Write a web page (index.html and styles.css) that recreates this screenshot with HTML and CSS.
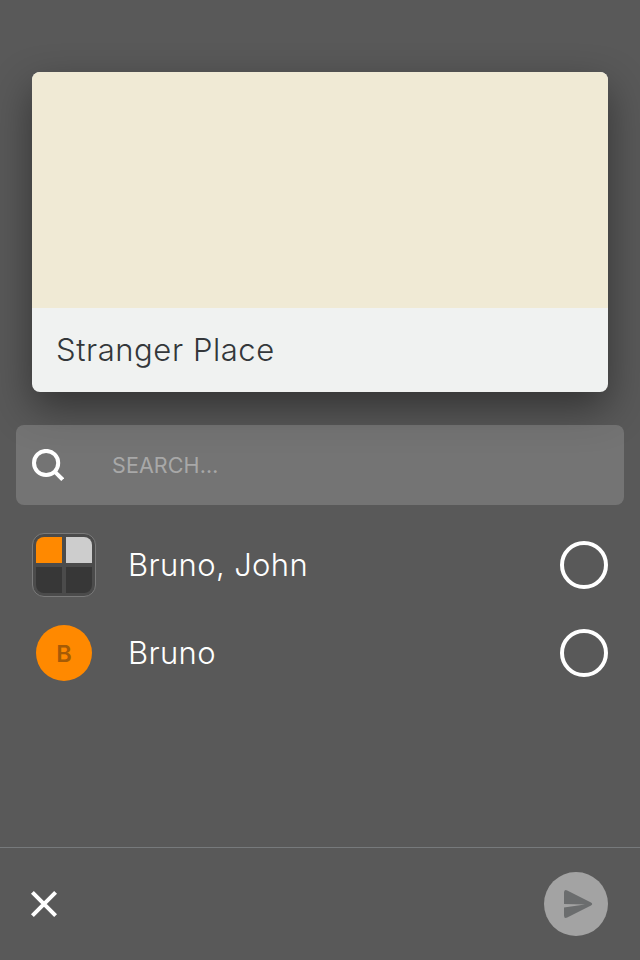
FILE: index.html
```html
<!DOCTYPE html>
<html lang="en">
<head>
<meta charset="utf-8">
<title>Share</title>
<link rel="stylesheet" href="styles.css">
</head>
<body>
<main class="screen">
  <article class="card">
    <div class="card-media"></div>
    <h1 class="card-title">Stranger Place</h1>
  </article>
  <label class="search">
    <svg class="search-icon" width="32" height="32" viewBox="0 0 32 32" fill="none" stroke="#fff" stroke-width="4"><circle cx="14.1" cy="14" r="12.1"/><path d="M22.7 22.7 30.7 30.6"/></svg>
    <span class="search-text">SEARCH…</span>
  </label>
  <ul class="list">
    <li class="row">
      <div class="group-avatar"><i class="orange"></i><i class="light"></i><i></i><i></i></div>
      <span class="name">Bruno, John</span>
      <span class="radio"></span>
    </li>
    <li class="row">
      <div class="avatar">B</div>
      <span class="name">Bruno</span>
      <span class="radio"></span>
    </li>
  </ul>
  <footer class="bar">
    <svg width="28" height="28" viewBox="0 0 28 28" stroke="#fff" stroke-width="4"><path d="M2.4 2.4 25.6 25.6M25.6 2.4 2.4 25.6"/></svg>
    <div class="send">
      <svg width="64" height="64" viewBox="0 0 64 64" fill="#6b6d6e"><path d="M20 32V20.5Q20 17 23.2 18.4L47 30.4Q48.2 31.1 48.2 32Q48.2 32.9 47 33.6L23.2 45.6Q20 47 20 43.5V35.4L41 32.5Z"/></svg>
    </div>
  </footer>
</main>
</body>
</html>
```
FILE: styles.css
```css
* { box-sizing: border-box; }
body { margin: 0; background: #595959; font-family: Inter, sans-serif; color: #fff; }
.screen { display: flex; flex-direction: column; height: 960px; padding-top: 72px; overflow: hidden; }
.card { flex: none; height: 320px; margin: 0 32px; border-radius: 8px; background: #f0f2f1; box-shadow: 0 16px 40px rgba(0, 0, 0, .43); }
.card-media { height: 236px; border-radius: 8px 8px 0 0; background: #f0ead5; }
.card-title { margin: 0; padding-left: 24px; font-size: 31px; font-weight: 300; line-height: 83px; letter-spacing: .57px; color: #33373a; }
.search { position: relative; display: flex; flex: none; align-items: center; height: 80px; margin: 33px 16px 0; padding-left: 16px; border-radius: 8px; background: rgba(255, 255, 255, .165); }
.search-text { margin-left: 48px; font-size: 21.5px; font-weight: 400; letter-spacing: .1px; color: #a8a8a8; }
.list { flex: 1; margin: 0; padding: 16px 32px; list-style: none; }
.row { display: flex; align-items: center; height: 88px; }
.group-avatar { display: grid; grid-template-columns: 26px 26px; grid-template-rows: 26px 26px; gap: 4px; width: 64px; height: 64px; padding: 3px; border: 1px solid #7a7a7a; border-radius: 12px; background: #4b4b4b; }
.group-avatar i { background: #373737; }
.group-avatar .orange { background: #ff8900; border-top-left-radius: 8px; }
.group-avatar .light { background: #cdcdcd; border-top-right-radius: 8px; }
.group-avatar i:nth-child(3) { border-bottom-left-radius: 8px; }
.group-avatar i:nth-child(4) { border-bottom-right-radius: 8px; }
.avatar { width: 56px; height: 56px; margin: 0 4px; border-radius: 50%; background: #ff8900; color: #a55b06; font-size: 23.5px; font-weight: 600; line-height: 58px; text-align: center; }
.name { flex: 1; padding-bottom: 1px; margin-left: 32px; font-size: 31px; font-weight: 300; line-height: 40px; letter-spacing: .36px; }
.radio { width: 48px; height: 48px; border: 4px solid #fff; border-radius: 50%; }
.bar { display: flex; flex: none; align-items: center; justify-content: space-between; height: 113px; padding: 0 32px 0 30px; border-top: 1px solid #777a7c; }
.send { width: 64px; height: 64px; border-radius: 50%; background: #a3a3a3; }
.send svg { display: block; }
```
